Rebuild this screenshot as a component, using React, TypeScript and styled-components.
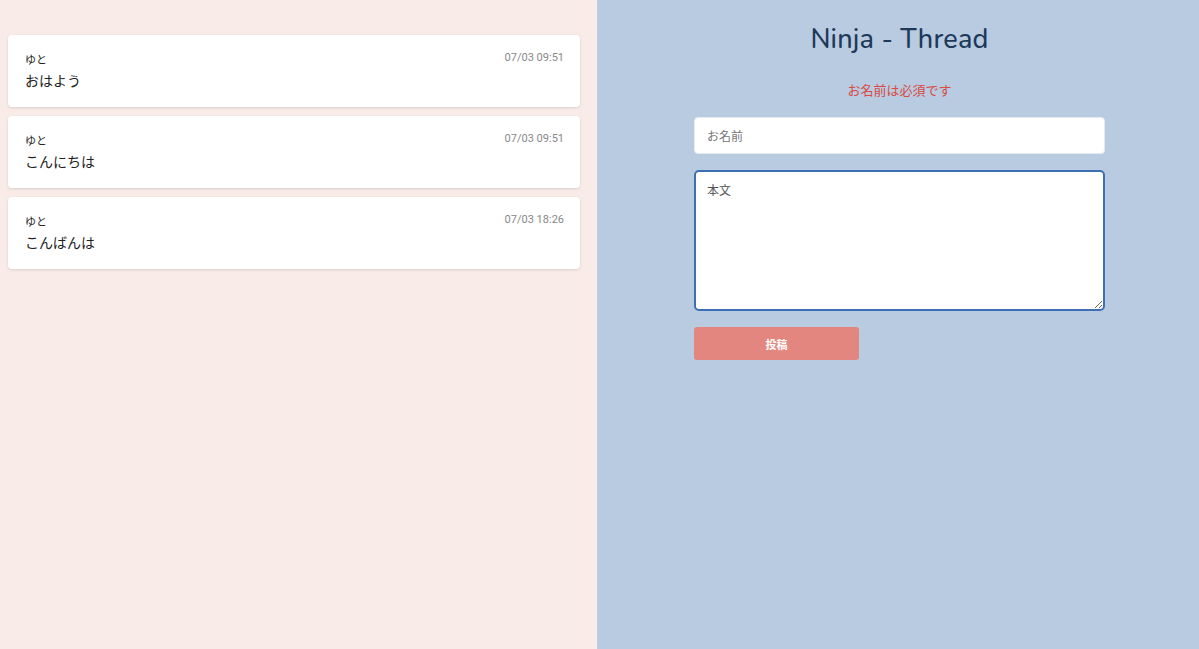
import React, { useState } from 'react';
import styled, { createGlobalStyle } from 'styled-components';

const GlobalStyle = createGlobalStyle`
  html, body {
    margin: 0;
    padding: 0;
    height: 100%;
  }
  body {
    font-family: 'Noto Sans', 'Noto Sans CJK JP', sans-serif;
    color: #222;
  }
  #root {
    height: 100%;
  }
`;

const Layout = styled.div`
  display: flex;
  width: 1199px;
  height: 649px;
`;

const ThreadPane = styled.div`
  width: 597px;
  flex-shrink: 0;
  background: #f8ebe8;
  padding: 35px 17px 8px 8px;
  box-sizing: border-box;
  display: flex;
  flex-direction: column;
  gap: 9px;
`;

const Card = styled.div`
  background: #ffffff;
  border-radius: 4px;
  box-shadow: 0 1px 3px rgba(0, 0, 0, 0.12);
  height: 72px;
  box-sizing: border-box;
  padding: 16px 16px 0 17px;
`;

const CardHead = styled.div`
  display: flex;
  justify-content: space-between;
  align-items: center;
  height: 16px;
`;

const Author = styled.span`
  font-family: 'Noto Sans CJK JP', sans-serif;
  font-size: 11px;
  color: #222;
`;

const Stamp = styled.span`
  font-family: 'Roboto', 'Liberation Sans', sans-serif;
  font-size: 11px;
  color: #888;
  margin-top: -4px;
`;

const Body = styled.div`
  font-family: 'Noto Sans CJK JP', sans-serif;
  font-size: 14px;
  color: #222;
  margin-top: 3px;
`;

const FormPane = styled.div`
  flex: 1;
  background: #b9cbe1;
  display: flex;
  flex-direction: column;
  align-items: center;
  padding-top: 21px;
  padding-left: 3px;
`;

const Title = styled.h1`
  margin: 0;
  font-family: 'Nunito', 'Lato', 'Open Sans', sans-serif;
  font-weight: 500;
  font-size: 27px;
  line-height: 38px;
  color: #1d3a5a;
  letter-spacing: 0.2px;
`;

const Error = styled.p`
  margin: 22px 0 0;
  font-family: 'Noto Sans CJK JP', sans-serif;
  font-size: 13px;
  line-height: 18px;
  color: #d84a43;
`;

const Form = styled.form`
  width: 411px;
  display: flex;
  flex-direction: column;
  margin-top: 18px;
`;

const NameInput = styled.input`
  height: 37px;
  box-sizing: border-box;
  border: 1px solid #e6e9ee;
  border-radius: 4px;
  background: #fff;
  padding: 0 12px;
  font-family: 'Noto Sans CJK JP', sans-serif;
  font-size: 12px;
  color: #333;
  outline: none;
  &::placeholder {
    color: #777;
  }
`;

const BodyInput = styled.textarea`
  margin-top: 16px;
  height: 141px;
  box-sizing: border-box;
  border: 2px solid #3f6fb3;
  border-radius: 5px;
  background: #fff;
  padding: 9px 11px;
  font-family: 'Noto Sans CJK JP', sans-serif;
  font-size: 12px;
  color: #333;
  outline: none;
  resize: vertical;
  &::placeholder {
    color: #555;
  }
`;

const Submit = styled.button`
  margin-top: 16px;
  width: 165px;
  height: 33px;
  border: none;
  border-radius: 3px;
  background: #e2867f;
  color: #fff;
  font-family: 'Noto Sans CJK JP', sans-serif;
  font-weight: 700;
  font-size: 11px;
  cursor: pointer;
`;

const posts = [
  { name: 'ゆと', date: '07/03 09:51', text: 'おはよう' },
  { name: 'ゆと', date: '07/03 09:51', text: 'こんにちは' },
  { name: 'ゆと', date: '07/03 18:26', text: 'こんばんは' },
];

export default function App() {
  const [name, setName] = useState('');
  const [text, setText] = useState('');

  return (
    <>
      <GlobalStyle />
      <Layout>
        <ThreadPane>
          {posts.map((p, i) => (
            <Card key={i}>
              <CardHead>
                <Author>{p.name}</Author>
                <Stamp>{p.date}</Stamp>
              </CardHead>
              <Body>{p.text}</Body>
            </Card>
          ))}
        </ThreadPane>
        <FormPane>
          <Title>Ninja - Thread</Title>
          <Error>お名前は必須です</Error>
          <Form onSubmit={(e) => e.preventDefault()}>
            <NameInput
              placeholder="お名前"
              value={name}
              onChange={(e) => setName(e.target.value)}
            />
            <BodyInput
              placeholder="本文"
              value={text}
              onChange={(e) => setText(e.target.value)}
            />
            <Submit type="submit">投稿</Submit>
          </Form>
        </FormPane>
      </Layout>
    </>
  );
}
